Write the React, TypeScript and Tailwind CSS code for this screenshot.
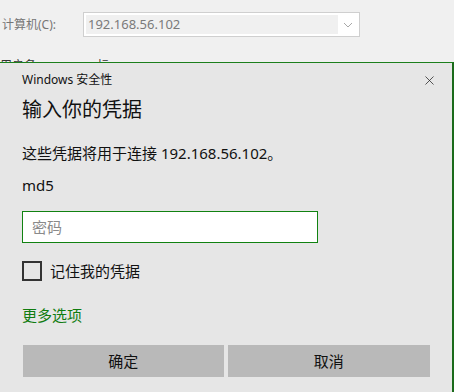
import { X } from "lucide-react";

export default function App() {
  return (
    <div className="w-[454px] h-[392px] overflow-hidden bg-[#f0f0f0] font-['Noto_Sans','Noto_Sans_CJK_SC',sans-serif]">
      {/* window behind the dialog */}
      <div className="flex items-center h-[50px] pb-[1px]">
        <span className="pl-[2px] w-[83px] text-[12px] text-[#767676]">计算机(C):</span>
        <div className="flex items-center w-[277px] h-[25px] border border-[#cfcfcf] bg-white p-[2px]">
          <div className="flex items-center flex-1 h-full bg-[#f0f0f0] pl-[2px] text-[13px] text-[#7a7a7a]">
            192.168.56.102
          </div>
          <svg width="18" height="10" viewBox="0 0 18 10" className="ml-[1px]">
            <path d="M5 3 L9 7 L13 3" fill="none" stroke="#a8a8a8" strokeWidth="1" />
          </svg>
        </div>
      </div>
      <div className="h-[12px] overflow-hidden flex text-[12px] leading-[12px] text-[#333]">
        <span className="mt-[10px]">用户名</span>
        <span className="mt-[10px] ml-[61px]">标</span>
      </div>

      {/* credential dialog */}
      <div className="w-[454px] h-[330px] bg-[#e6e6e6] border-t border-r-2 border-t-[#1c7f1c] border-r-[#1b6b1b] text-[#000]">
        <div className="flex items-center justify-between h-[34px] pl-[22px] pr-[15px]">
          <span className="text-[12px] text-[#111]">Windows 安全性</span>
          <X className="w-[15px] h-[15px] text-[#222]" strokeWidth={1.2} />
        </div>
        <div className="pl-[22px] pr-[22px]">
          <div className="text-[20px] leading-[26px] text-[#111]">输入你的凭据</div>
          <div className="mt-[20px] text-[15px] leading-[20px] text-[#111]">这些凭据将用于连接 192.168.56.102。</div>
          <div className="mt-[12px] text-[15px] leading-[20px] text-[#111]">md5</div>
          <div className="mt-[16px] w-[296px] h-[32px] border border-[#118211] bg-white flex items-center pl-[9px] text-[15px] text-[#8a8a8a]">
            密码
          </div>
          <div className="mt-[18px] flex items-center h-[20px]">
            <div className="w-[20px] h-[20px] border-2 border-[#333]" />
            <span className="ml-[8px] text-[15px] text-[#111]">记住我的凭据</span>
          </div>
          <div className="mt-[24px] text-[15px] leading-[20px] text-[#107c10]">更多选项</div>
          <div className="mt-[20px] flex gap-[4px] pl-[1px]">
            <button className="w-[201px] h-[32px] bg-[#b9b9b9] text-[15px] text-[#111]">确定</button>
            <button className="w-[203px] h-[32px] bg-[#b9b9b9] text-[15px] text-[#111]">取消</button>
          </div>
        </div>
      </div>
    </div>
  );
}
